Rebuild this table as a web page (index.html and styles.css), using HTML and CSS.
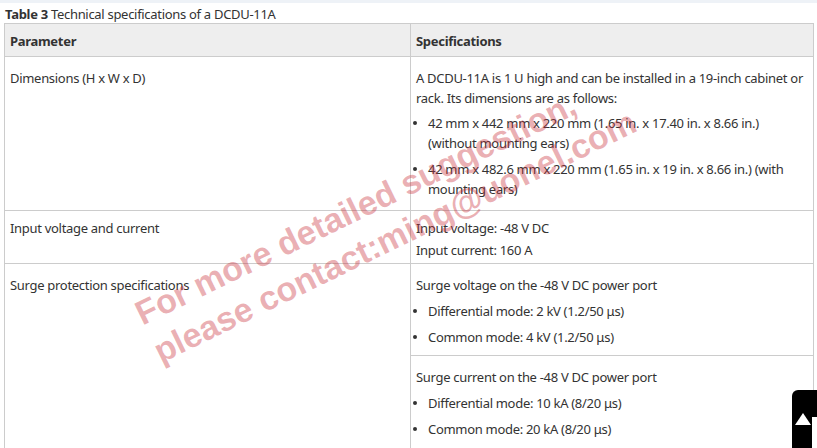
FILE: index.html
```html
<!DOCTYPE html>
<html lang="en">
<head>
<meta charset="utf-8">
<title>Technical specifications of a DCDU-11A</title>
<link rel="stylesheet" href="styles.css">
</head>
<body>
<div class="topbar"></div>
<p class="caption"><b>Table 3</b> Technical specifications of a DCDU-11A</p>
<table class="spec">
  <thead>
    <tr><th class="col-param">Parameter</th><th>Specifications</th></tr>
  </thead>
  <tbody>
    <tr class="row-dim">
      <td>Dimensions (H x W x D)</td>
      <td>
        <p>A DCDU-11A is 1 U high and can be installed in a 19-inch cabinet or rack. Its dimensions are as follows:</p>
        <ul>
          <li>42 mm x 442 mm x 220 mm (1.65 in. x 17.40 in. x 8.66 in.) (without mounting ears)</li>
          <li>42 mm x 482.6 mm x 220 mm (1.65 in. x 19 in. x 8.66 in.) (with mounting ears)</li>
        </ul>
      </td>
    </tr>
    <tr class="row-input">
      <td>Input voltage and current</td>
      <td>
        <p>Input voltage: -48 V DC</p>
        <p>Input current: 160 A</p>
      </td>
    </tr>
    <tr class="row-surge">
      <td rowspan="2">Surge protection specifications</td>
      <td class="surge-voltage">
        <p>Surge voltage on the -48 V DC power port</p>
        <ul>
          <li>Differential mode: 2 kV (1.2/50 μs)</li>
          <li>Common mode: 4 kV (1.2/50 μs)</li>
        </ul>
      </td>
    </tr>
    <tr class="row-surge">
      <td>
        <p>Surge current on the -48 V DC power port</p>
        <ul>
          <li>Differential mode: 10 kA (8/20 μs)</li>
          <li>Common mode: 20 kA (8/20 μs)</li>
        </ul>
      </td>
    </tr>
  </tbody>
</table>

<div class="watermark">For more detailed suggestion,<br>please contact:ming@uonel.com</div>

<div class="totop">
  <svg width="30" height="60" viewBox="0 0 30 60" aria-hidden="true">
    <path d="M11 23 L19 35 L3 35 Z" fill="#fff"/>
    <rect x="20" y="27" width="5" height="33" fill="#fff"/>
  </svg>
</div>
</body>
</html>
```

FILE: styles.css
```css
html, body {
  margin: 0;
  padding: 0;
  background: #fff;
}
body {
  font-family: "Noto Sans", "Open Sans", sans-serif;
  font-size: 13px;
  letter-spacing: -0.3px;
  color: #333;
  position: relative;
  overflow: hidden;
  height: 448px;
}
.topbar {
  height: 3px;
  background: #eef2f7;
}
.caption {
  margin: 0;
  padding: 3px 0 0 5px;
  height: 17px;
  line-height: 17px;
}
.caption b {
  font-weight: bold;
}
.spec {
  margin-left: 4px;
  width: 810px;
  border-collapse: collapse;
  table-layout: fixed;
}
.spec th, .spec td {
  border: 1px solid #cccccc;
  text-align: left;
  vertical-align: top;
  padding: 11px 5px 11px 5px;
  line-height: 20px;
}
.spec th {
  background: #eeeeee;
  font-weight: bold;
  padding: 7px 5px 5px 5px;
  height: 20px;
}
.col-param {
  width: 395px;
}
.spec p {
  margin: 0;
}
.spec ul {
  margin: 0;
  padding: 0 0 0 12px;
  list-style: none;
}
.spec li {
  margin-top: 6px;
}
.spec li::before {
  content: "";
  display: inline-block;
  width: 4px;
  height: 4px;
  border-radius: 50%;
  background: #333;
  margin-left: -15px;
  margin-right: 11px;
  vertical-align: 3px;
}
.row-dim li:first-child {
  margin-top: 5px;
}
.row-input td {
  padding-top: 7px;
  padding-bottom: 3px;
}
.row-input p + p {
  margin-top: 2px;
}
.spec td.surge-voltage {
  padding-bottom: 8px;
}
.watermark {
  position: absolute;
  left: 128px;
  top: 296px;
  transform-origin: left top;
  transform: rotate(-26deg);
  font-family: "Liberation Sans", Arial, sans-serif;
  font-weight: bold;
  font-size: 34px;
  letter-spacing: 0;
  line-height: 42px;
  color: rgba(200, 45, 55, 0.38);
  white-space: nowrap;
  pointer-events: none;
}
.totop {
  position: absolute;
  left: 792px;
  top: 390px;
  width: 50px;
  height: 70px;
  background: #000;
  border-radius: 6px;
}
.totop svg {
  display: block;
}
```
